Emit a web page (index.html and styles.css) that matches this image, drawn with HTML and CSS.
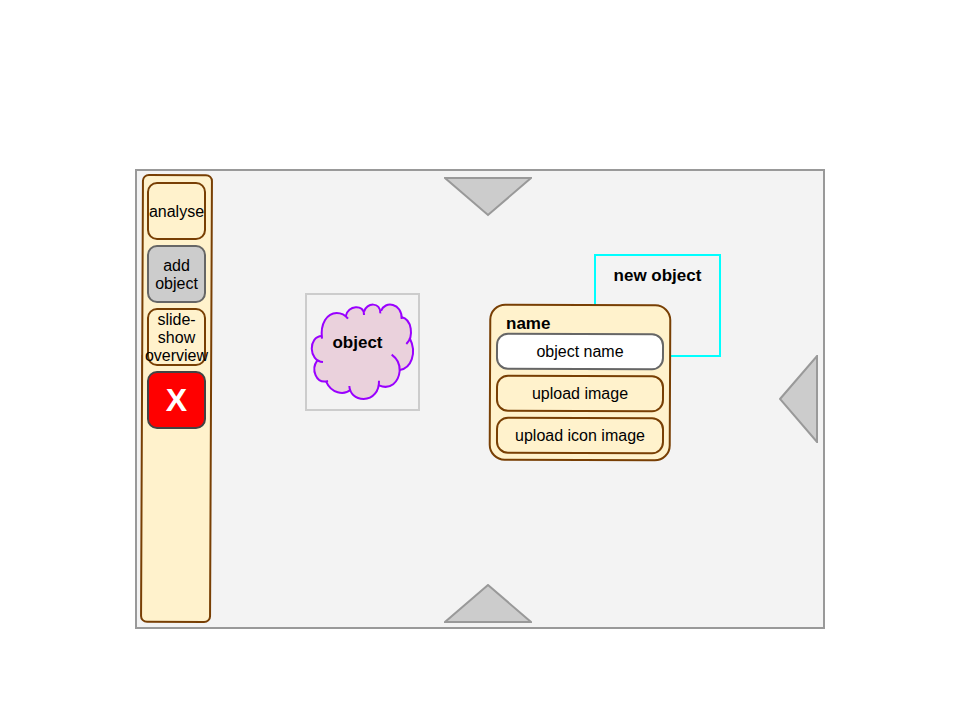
FILE: index.html
```html
<!DOCTYPE html>
<html lang="en">
<head>
<meta charset="utf-8">
<title>Object editor</title>
<link rel="stylesheet" href="styles.css">
</head>
<body>
<main class="canvas">
  <button class="arrow arrow-left" type="button" aria-label="Pan left">
    <svg width="40" height="88" viewBox="0 0 40 88"><path d="M1 44 L38 1 V87 Z"/></svg>
  </button>
  <nav class="toolbar tilted">
    <button class="tool" type="button">analyse</button>
    <button class="tool tool-active" type="button">add<br>object</button>
    <button class="tool" type="button">slide-<br>show<br>overview</button>
    <button class="tool tool-close" type="button">X</button>
  </nav>

  <button class="arrow arrow-up" type="button" aria-label="Pan up">
    <svg width="88" height="40" viewBox="0 0 88 40"><path d="M1 1 H87 L44 38 Z"/></svg>
  </button>
  <button class="arrow arrow-right" type="button" aria-label="Pan right">
    <svg width="40" height="88" viewBox="0 0 40 88"><path d="M1 44 L38 1 V87 Z"/></svg>
  </button>
  <button class="arrow arrow-down" type="button" aria-label="Pan down">
    <svg width="88" height="40" viewBox="0 0 88 40"><path d="M1 38 H87 L44 1 Z"/></svg>
  </button>

  <section class="node node-object">
    <svg class="cloud" viewBox="36 30 333 342" aria-hidden="true">
      <path class="cloud-fill" d="M81 157 C76 114 95 84 125 84 Q142 84 154 97 C162 60 203 60 207 84 C214 50 250 52 258 80 C268 48 318 52 320 97 C342 105 354 138 344 162 C366 206 350 248 314 255 C314 294 286 315 252 302 C250 328 232 342 206 342 C184 342 170 332 165 314 C140 332 110 323 93 290 C60 292 50 253 66 227 C42 216 46 155 81 153 Z"/>
      <path class="cloud-line" d="M81 161 C75 115 97 84 125 84 Q146 84 159 101"/>
      <path class="cloud-line" d="M152 94 C158 60 208 56 207 90"/>
      <path class="cloud-line" d="M207 80 C214 52 258 50 256 85"/>
      <path class="cloud-line" d="M258 78 C269 46 322 54 320 102"/>
      <path class="cloud-line" d="M319 96 C351 103 357 155 334 177"/>
      <path class="cloud-line" d="M344 159 C367 205 348 250 314 255"/>
      <path class="cloud-line" d="M290 209 C311 224 315 240 314 258 C311 291 286 316 252 301"/>
      <path class="cloud-line" d="M252 287 C253 318 234 342 206 342 C181 342 164 325 163 303"/>
      <path class="cloud-line" d="M167 314 C146 332 109 325 93 289"/>
      <path class="cloud-line" d="M99 288 C63 298 47 253 67 226"/>
      <path class="cloud-line" d="M84 231 C40 228 39 154 81 153"/>
    </svg>
    <span class="node-title">object</span>
  </section>

  <section class="node node-new">
    <span class="node-title">new object</span>
  </section>

  <form class="panel tilted">
    <label class="panel-label" for="object-name">name</label>
    <div class="field field-text tilted">
      <input class="control" id="object-name" type="text" value="object name">
    </div>
    <div class="field tilted"><button class="control" type="button">upload image</button></div>
    <div class="field tilted"><button class="control" type="button">upload icon image</button></div>
  </form>
</main>
</body>
</html>
```
FILE: styles.css
```css
* {
  box-sizing: border-box;
}

body {
  margin: 0;
  padding: 169px 135px 91px;
  background: #fff;
  color: #000;
  font: 16px/18px "Liberation Sans", Arial, sans-serif;
}

button,
input {
  margin: 0;
  padding: 0;
  border: 0;
  background: none;
  color: inherit;
  font: inherit;
}

.canvas {
  position: relative;
  display: flex;
  min-height: 460px;
  padding: 3px 4px 4px;
  border: 2px solid #999;
  background: #f3f3f3;
}

/* Surfaces with a slightly hand-placed frame; their contents stay level. */
.tilted {
  position: relative;
  isolation: isolate;
}

.tilted::before {
  content: "";
  position: absolute;
  inset: 0;
  z-index: -1;
  border: 2px solid #783f04;
  border-radius: 12px;
  background: #fff2cc;
  transform: rotate(0.25deg);
}

.toolbar {
  display: flex;
  flex-direction: column;
  gap: 5px;
  width: 71px;
  padding: 8px 6px;
}

.toolbar::before {
  border-radius: 7px;
}

.tool {
  display: flex;
  align-items: center;
  justify-content: center;
  height: 58px;
  padding-top: 2px;
  border: 2px solid #783f04;
  border-radius: 10px;
  background: #fff2cc;
  white-space: nowrap;
}

.tool-active {
  border-color: #666;
  background: #ccc;
}

.tool-close {
  padding: 0;
  border-color: #434343;
  background: #f00;
  color: #fff;
  font-size: 32px;
  font-weight: bold;
}

.arrow {
  position: absolute;
}

.arrow svg {
  display: block;
  fill: #ccc;
  stroke: #999;
  stroke-width: 2px;
}

.arrow-left {
  top: 184px;
  left: 3px;
  transform: scaleX(-1);
}

.arrow-up {
  top: 6px;
  left: 307px;
}

.arrow-right {
  top: 184px;
  right: 4px;
}

.arrow-down {
  bottom: 3px;
  left: 307px;
}

.node {
  position: absolute;
  display: grid;
  justify-items: center;
}

.node-title {
  grid-area: 1 / 1;
  font-size: 17px;
  font-weight: bold;
}

.node-object {
  top: 122px;
  left: 168px;
  width: 115px;
  height: 118px;
  border: 2px solid #ccc;
}

.node-object .node-title {
  padding: 39px 10px 0 0;
}

.cloud {
  grid-area: 1 / 1;
  width: 100%;
  height: 100%;
}

.cloud-fill {
  fill: #ead1dc;
}

.cloud-line {
  fill: none;
  stroke: #90f;
  stroke-width: 6px;
}

.node-new {
  top: 83px;
  left: 457px;
  width: 127px;
  height: 103px;
  padding-top: 11px;
  border: 2px solid #0ff;
}

.panel {
  position: absolute;
  top: 133px;
  left: 352px;
  display: flex;
  flex-direction: column;
  gap: 5px;
  width: 182px;
  padding: 10px 7px 7px;
}

.panel::before {
  border-radius: 16px;
}

.panel-label {
  margin-bottom: -6px;
  padding-left: 10px;
  font-size: 17px;
  font-weight: bold;
  line-height: 20px;
}

.field-text::before {
  border-color: #666;
  background: #fff;
}

.control {
  display: block;
  width: 100%;
  height: 37px;
  text-align: center;
}
```
